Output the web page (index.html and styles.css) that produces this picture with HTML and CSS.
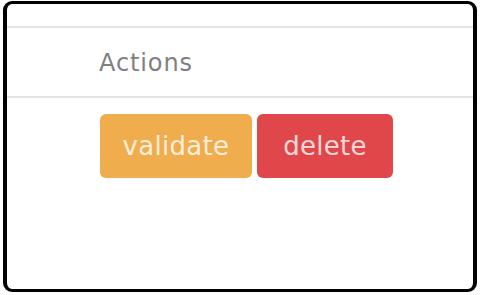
FILE: index.html
```html
<!DOCTYPE html>
<html>
<head>
<meta charset="utf-8">
<link rel="stylesheet" href="styles.css">
</head>
<body>
<div class="frame">
  <div class="spacer"></div>
  <div class="head-row"><span class="th">Actions</span></div>
  <div class="body-row">
    <button class="btn btn-warning">validate</button>
    <button class="btn btn-danger">delete</button>
  </div>
</div>
</body>
</html>
```

FILE: styles.css
```css
html, body {
  margin: 0;
  padding: 0;
  background: #fff;
}
body {
  font-family: "DejaVu Sans", "Open Sans", sans-serif;
}
.frame {
  box-sizing: border-box;
  margin: 1px 0 0 3px;
  width: 474px;
  height: 291px;
  border: 3px solid #000;
  border-left-width: 4px;
  border-right-width: 4px;
  border-radius: 9px;
  overflow: hidden;
}
.spacer {
  height: 22px;
  border-bottom: 2px solid #e4e4e4;
}
.head-row {
  box-sizing: border-box;
  height: 70px;
  padding-left: 92px;
  display: flex;
  align-items: center;
  border-bottom: 2px solid #e4e4e4;
}
.th {
  color: #808080;
  font-size: 24px;
  letter-spacing: 0.9px;
  padding-top: 2px;
}
.body-row {
  display: flex;
  gap: 5px;
  padding: 16px 0 0 93px;
}
.btn {
  box-sizing: border-box;
  height: 64px;
  border: 1px solid transparent;
  border-radius: 6px;
  font-family: inherit;
  font-size: 26px;
  letter-spacing: 0.3px;
  color: rgba(255,255,255,0.8);
  padding: 0 10px;
}
.btn-warning {
  background: #f0ad4e;
  width: 152px;
}
.btn-danger {
  background: #e0474a;
  width: 136px;
}
```
